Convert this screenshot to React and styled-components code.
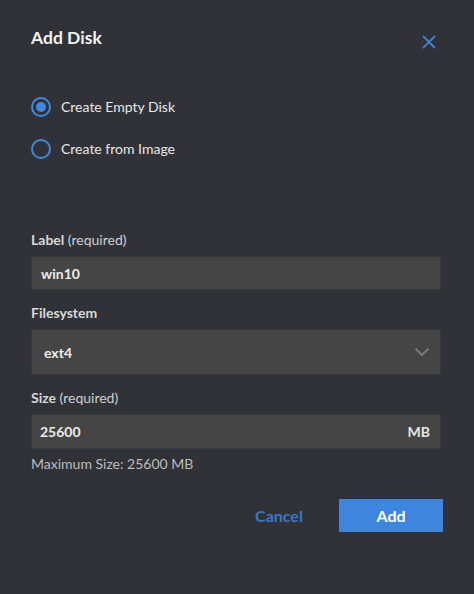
import styled, { createGlobalStyle } from 'styled-components';

const GlobalStyle = createGlobalStyle`
    html, body {
        margin: 0;
        padding: 0;
        background: #303238;
    }
    body {
        font-family: Lato, "Open Sans", "Liberation Sans", sans-serif;
    }
`;

const App = () => {
    return (
        <Dialog>
            <GlobalStyle />
            <Header>
                <Title>Add Disk</Title>
                <Close aria-label="Close">
                    <svg width="14" height="14" viewBox="0 0 14 14">
                        <path d="M1.5 1.5 L12.5 12.5 M12.5 1.5 L1.5 12.5" stroke="#3d84d8" strokeWidth="1.8" strokeLinecap="round" />
                    </svg>
                </Close>
            </Header>

            <RadioGroup>
                <RadioRow>
                    <Radio checked />
                    <RadioText>Create Empty Disk</RadioText>
                </RadioRow>
                <RadioRow>
                    <Radio />
                    <RadioText>Create from Image</RadioText>
                </RadioRow>
            </RadioGroup>

            <Field first>
                <Label><b>Label</b> (required)</Label>
                <Input>win10</Input>
            </Field>

            <Field>
                <Label><b>Filesystem</b></Label>
                <Select>
                    <span>ext4</span>
                    <svg width="16" height="10" viewBox="0 0 16 10">
                        <path d="M1.5 1.5 L8 8 L14.5 1.5" stroke="#7a7a7a" strokeWidth="2" fill="none" />
                    </svg>
                </Select>
            </Field>

            <Field>
                <Label><b>Size</b> (required)</Label>
                <Input size>
                    <span>25600</span>
                    <Unit>MB</Unit>
                </Input>
                <Hint>Maximum Size: 25600 MB</Hint>
            </Field>

            <Actions>
                <CancelButton>Cancel</CancelButton>
                <AddButton>Add</AddButton>
            </Actions>
        </Dialog>
    );
};

const Dialog = styled.div`
    box-sizing: border-box;
    width: 474px;
    height: 594px;
    padding: 28px 31px 0 31px;
    background: #303238;
    display: flex;
    flex-direction: column;
`;

const Header = styled.div`
    display: flex;
    justify-content: space-between;
    align-items: flex-start;
`;

const Title = styled.h2`
    margin: 0;
    font-size: 17.5px;
    line-height: 20px;
    font-weight: 700;
    color: #f3f3f3;
`;

const Close = styled.div`
    width: 14px;
    height: 14px;
    margin-top: 7px;
    margin-right: 7px;
    svg { display: block; }
`;

const RadioGroup = styled.div`
    display: flex;
    flex-direction: column;
    gap: 22px;
    margin-top: 48px;
`;

const RadioRow = styled.label`
    display: flex;
    align-items: center;
    gap: 10px;
    height: 20px;
`;

const Radio = styled.span`
    box-sizing: border-box;
    width: 20px;
    height: 20px;
    border-radius: 50%;
    border: 2px solid #3d8ae0;
    display: flex;
    align-items: center;
    justify-content: center;
    &::after {
        content: '';
        width: 10px;
        height: 10px;
        border-radius: 50%;
        background: ${props => props.checked ? '#3d8ae0' : 'transparent'};
    }
`;

const RadioText = styled.span`
    font-size: 14px;
    line-height: 20px;
    color: #e8e8e8;
`;

const Field = styled.div`
    display: flex;
    flex-direction: column;
    margin-top: ${props => props.first ? '72px' : '14px'};
    padding-right: 2px;
`;

const Label = styled.div`
    font-size: 14px;
    line-height: 17px;
    color: #cfcfcf;
    margin-bottom: 8px;
    b {
        font-weight: 700;
        color: #d8d8d8;
    }
`;

const Input = styled.div`
    box-sizing: border-box;
    height: ${props => props.size ? '35px' : '34px'};
    padding: 0 10px 0 ${props => props.size ? '8px' : '9px'};
    background: #454545;
    border: 1px solid #3a3a3b;
    display: flex;
    align-items: center;
    justify-content: space-between;
    font-size: 14px;
    font-weight: 700;
    color: #ececec;
`;

const Unit = styled.span`
    font-weight: 700;
    color: #e6e6e6;
`;

const Select = styled.div`
    box-sizing: border-box;
    height: 46px;
    padding: 0 10px 0 12px;
    background: #454545;
    border: 1px solid #3a3a3b;
    display: flex;
    align-items: center;
    justify-content: space-between;
    font-size: 14px;
    font-weight: 700;
    color: #ececec;
    svg { display: block; }
`;

const Hint = styled.div`
    margin-top: 6px;
    font-size: 14px;
    line-height: 17px;
    color: #bdbdbd;
`;

const Actions = styled.div`
    display: flex;
    justify-content: flex-end;
    gap: 8px;
    margin-top: 27px;
`;

const ButtonBase = styled.button`
    width: 104px;
    height: 33px;
    border: none;
    padding: 0;
    font-family: inherit;
    font-size: 16px;
    font-weight: 700;
    cursor: pointer;
`;

const CancelButton = styled(ButtonBase)`
    background: transparent;
    color: #3a78c6;
`;

const AddButton = styled(ButtonBase)`
    background: #3c86e0;
    color: #ffffff;
`;

export default App;
